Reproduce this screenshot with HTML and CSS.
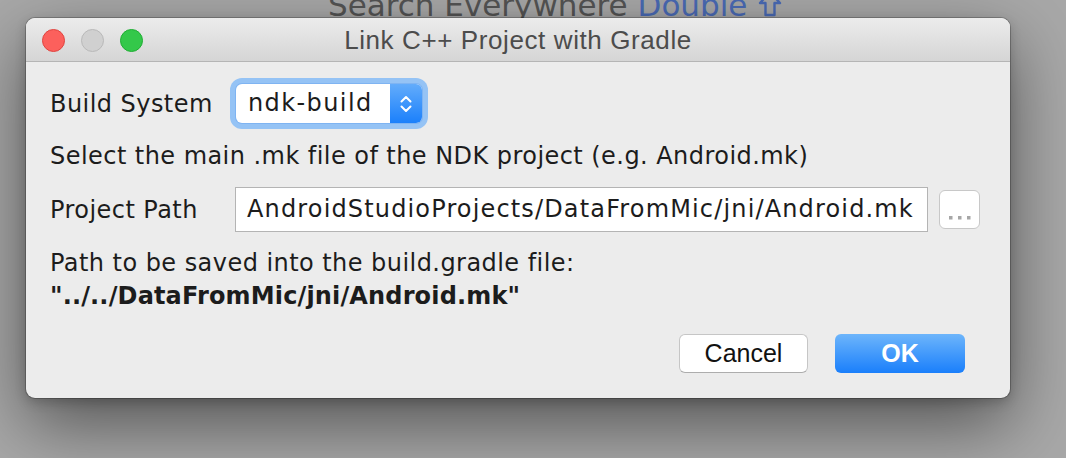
FILE: index.html
```html
<!DOCTYPE html>
<html lang="en">
<head>
    <meta charset="UTF-8">
    <meta name="viewport" content="width=device-width, initial-scale=1.0">
    <title>Link C++ Project with Gradle</title>
    <link rel="stylesheet" href="styles.css">
</head>
<body>

    <!-- IDE text behind the dialog -->
    <div class="backdrop">Search Everywhere <span class="shortcut">Double
        <svg class="shift" width="26" height="30" viewBox="0 0 26 30">
            <path d="M13 3 L23 14 H17.5 V26 H8.5 V14 H3 Z" fill="none" stroke="#4a6ab4" stroke-width="2.4" stroke-linejoin="round"/>
        </svg></span></div>

    <div class="window">
        <div class="titlebar">
            <div class="lights">
                <span class="light close"></span>
                <span class="light minimize"></span>
                <span class="light zoom"></span>
            </div>
            <div class="title">Link C++ Project with Gradle</div>
            <div></div>
        </div>

        <div class="content">
            <div class="row build-row">
                <label class="field-label">Build System</label>
                <div class="select">
                    <span class="select-value">ndk-build</span>
                    <span class="select-arrows">
                        <svg width="14" height="24" viewBox="0 0 14 24">
                            <polyline points="2.5,9.5 7,5 11.5,9.5" fill="none" stroke="#fff" stroke-width="2" stroke-linecap="round" stroke-linejoin="round"/>
                            <polyline points="2.5,14.5 7,19 11.5,14.5" fill="none" stroke="#fff" stroke-width="2" stroke-linecap="round" stroke-linejoin="round"/>
                        </svg>
                    </span>
                </div>
            </div>

            <p class="line select-hint">Select the main .mk file of the NDK project (e.g. Android.mk)</p>

            <div class="row path-row">
                <label class="field-label">Project Path</label>
                <div class="path-input">AndroidStudioProjects/DataFromMic/jni/Android.mk</div>
                <button class="browse" title="...">
                    <svg width="24" height="4" viewBox="0 0 24 4">
                        <rect x="1" y="0" width="3.5" height="3.5" fill="#a6a6a6"/>
                        <rect x="10" y="0" width="3.5" height="3.5" fill="#a6a6a6"/>
                        <rect x="19" y="0" width="3.5" height="3.5" fill="#a6a6a6"/>
                    </svg>
                </button>
            </div>

            <p class="line save-text">Path to be saved into the build.gradle file:</p>
            <p class="line save-path">"../../DataFromMic/jni/Android.mk"</p>

            <div class="actions">
                <button class="btn">Cancel</button>
                <button class="btn primary">OK</button>
            </div>
        </div>
    </div>

</body>
</html>
```

FILE: styles.css
```css
body {
margin: 0;
height: 458px;
overflow: hidden;
position: relative;
background-color: #a8a8a8;
font-family: 'DejaVu Sans', sans-serif;
color: #1c1c1c;
}

.backdrop {
position: absolute;
left: 328px;
top: -15px;
font-size: 31px;
line-height: 40px;
color: #545454;
white-space: nowrap;
}

.backdrop .shortcut {
color: #4a6ab4;
}

.shift {
vertical-align: -3px;
}

.window {
position: relative;
width: 984px;
height: 380px;
margin: 18px 0 0 26px;
background-color: #ececec;
border-radius: 9px;
overflow: hidden;
box-shadow: 0 0 0 1px rgba(0, 0, 0, 0.22), 0 4px 12px rgba(0, 0, 0, 0.2), 0 26px 70px rgba(0, 0, 0, 0.5);
}

.titlebar {
height: 43px;
display: grid;
grid-template-columns: 1fr auto 1fr;
align-items: center;
background: linear-gradient(#ececec, #d5d5d5);
border-bottom: 1px solid #b5b5b5;
}

.lights {
display: flex;
gap: 16px;
padding-left: 16px;
padding-top: 1px;
}

.light {
width: 23px;
height: 23px;
border-radius: 50%;
box-sizing: border-box;
}

.light.close {
background-color: #fc605c;
border: 1px solid #e0443f;
}

.light.minimize {
background-color: #d0d0d0;
border: 1px solid #b9b9b9;
}

.light.zoom {
background-color: #34c84a;
border: 1px solid #1fae33;
}

.title {
font-family: 'Liberation Sans', sans-serif;
font-size: 26px;
letter-spacing: 0.6px;
color: #4c4c4c;
padding-top: 2px;
}

.content {
display: flex;
flex-direction: column;
padding: 0 30px 0 24px;
font-size: 24px;
letter-spacing: 0.45px;
}

.row {
display: flex;
align-items: center;
}

.field-label {
width: 186px;
flex-shrink: 0;
}

.build-row {
margin-top: 22px;
height: 39px;
}

.select {
display: flex;
width: 186px;
height: 39px;
box-sizing: border-box;
background-color: #fff;
border-radius: 6px;
box-shadow: 0 0 0 1px #7fb4f2, 0 0 0 6px #95c3f5;
overflow: hidden;
}

.select-value {
flex: 1;
padding-left: 12px;
line-height: 39px;
letter-spacing: 1.4px;
}

.select-arrows {
width: 32px;
display: flex;
align-items: center;
justify-content: center;
background: linear-gradient(#63acfb, #1b80fb);
}

.line {
margin: 0;
line-height: 33px;
white-space: nowrap;
}

.select-hint {
margin-top: 17px;
}

.path-row {
margin-top: 14px;
height: 45px;
}

.path-row .field-label {
width: 185px;
}

.path-input {
width: 693px;
height: 45px;
box-sizing: border-box;
border: 1px solid #b4b4b4;
background-color: #fff;
padding-left: 11px;
line-height: 43px;
letter-spacing: 1.15px;
white-space: nowrap;
overflow: hidden;
}

.browse {
width: 41px;
height: 39px;
margin-left: 11px;
padding: 16px 0 0;
border: 1px solid #c8c8c8;
border-radius: 6px;
background-color: #fff;
display: flex;
justify-content: center;
align-items: center;
}

.save-text {
margin-top: 15px;
}

.save-path {
font-weight: bold;
letter-spacing: 0.15px;
}

.actions {
display: flex;
justify-content: flex-end;
gap: 27px;
margin-top: 21px;
padding-right: 15px;
}

.btn {
width: 129px;
height: 39px;
border: 1px solid #c6c6c6;
border-bottom-color: #adadad;
border-radius: 6px;
background-color: #fff;
font-family: 'Liberation Sans', sans-serif;
font-size: 25px;
letter-spacing: 0;
color: #111;
padding: 0;
}

.btn.primary {
width: 130px;
border: none;
background: linear-gradient(#6db5fb, #1a7ffb);
color: #fff;
font-weight: bold;
}
```
